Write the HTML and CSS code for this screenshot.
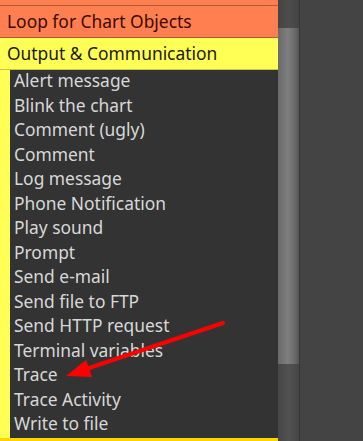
FILE: index.html
```html
<!DOCTYPE html>
<html lang="en">
<head>
  <meta charset="UTF-8" />
  <title>Blocks</title>
  <link rel="stylesheet" href="styles.css">
</head>
<body>
  <div class="window">
    <div class="panel">
      <div class="cat cat-top"></div>
      <div class="cat cat-loop">Loop for Chart Objects</div>
      <div class="cat cat-output">Output &amp; Communication</div>
      <div class="list">
        <div class="item">Alert message</div>
        <div class="item">Blink the chart</div>
        <div class="item">Comment (ugly)</div>
        <div class="item">Comment</div>
        <div class="item">Log message</div>
        <div class="item">Phone Notification</div>
        <div class="item">Play sound</div>
        <div class="item">Prompt</div>
        <div class="item">Send e-mail</div>
        <div class="item">Send file to FTP</div>
        <div class="item">Send HTTP request</div>
        <div class="item">Terminal variables</div>
        <div class="item">Trace</div>
        <div class="item">Trace Activity</div>
        <div class="item">Write to file</div>
      </div>
      <div class="cat-bottom"></div>
      <svg class="arrow" width="278" height="441" viewBox="0 0 278 441">
        <line x1="223" y1="323" x2="86" y2="369" stroke="#ff0000" stroke-width="4" stroke-linecap="round"/>
        <polygon points="66,376 86,360 92,377" fill="#ff0000"/>
      </svg>
    </div>
    <div class="scrollbar">
      <div class="track-top"></div>
      <div class="thumb"></div>
      <div class="track-bottom"></div>
    </div>
    <div class="side"></div>
  </div>
</body>
</html>
```
FILE: styles.css
```css
body {
  margin: 0;
  background: #444444;
  font-family: "Noto Sans", "Open Sans", sans-serif;
}

.window {
  display: flex;
  height: 441px;
  overflow: hidden;
}

.panel {
  position: relative;
  width: 278px;
  display: flex;
  flex-direction: column;
  background: #333333;
}

.cat {
  font-size: 17.4px;
  padding-left: 7px;
  line-height: 31px;
  height: 31px;
}

.cat-top {
  height: 5px;
  background: #ff7f50;
  border-bottom: 1px solid #b85a38;
}

.cat-loop {
  background: #ff7f50;
  color: #3a0a00;
  border-bottom: 1px solid #b85a38;
}

.cat-output {
  background: #ffff55;
  color: #1a1a10;
  border-bottom: 1px solid #c8c840;
}

.list {
  flex: 1;
  border-left: 10px solid #ffff55;
}

.item {
  color: #d8d8d8;
  font-size: 17.4px;
  height: 24.5px;
  line-height: 21px;
  padding-left: 4px;
  white-space: nowrap;
}

.cat-bottom {
  height: 3px;
  background: #ffd500;
}

.arrow {
  position: absolute;
  left: 0;
  top: 0;
}

.scrollbar {
  width: 21px;
  display: flex;
  flex-direction: column;
  border-right: 1px solid #363636;
}

.track-top {
  height: 28px;
  background: linear-gradient(to right, #444 0%, #4c4c4c 50%, #444 100%);
}

.thumb {
  height: 336px;
  background: linear-gradient(to right, #6a6a6a 0%, #7e7e7e 45%, #6e6e6e 75%, #555 100%);
}

.track-bottom {
  flex: 1;
  background: linear-gradient(to right, #464646 0%, #525252 50%, #464646 100%);
}

.side {
  flex: 1;
  background: #444444;
}
```
